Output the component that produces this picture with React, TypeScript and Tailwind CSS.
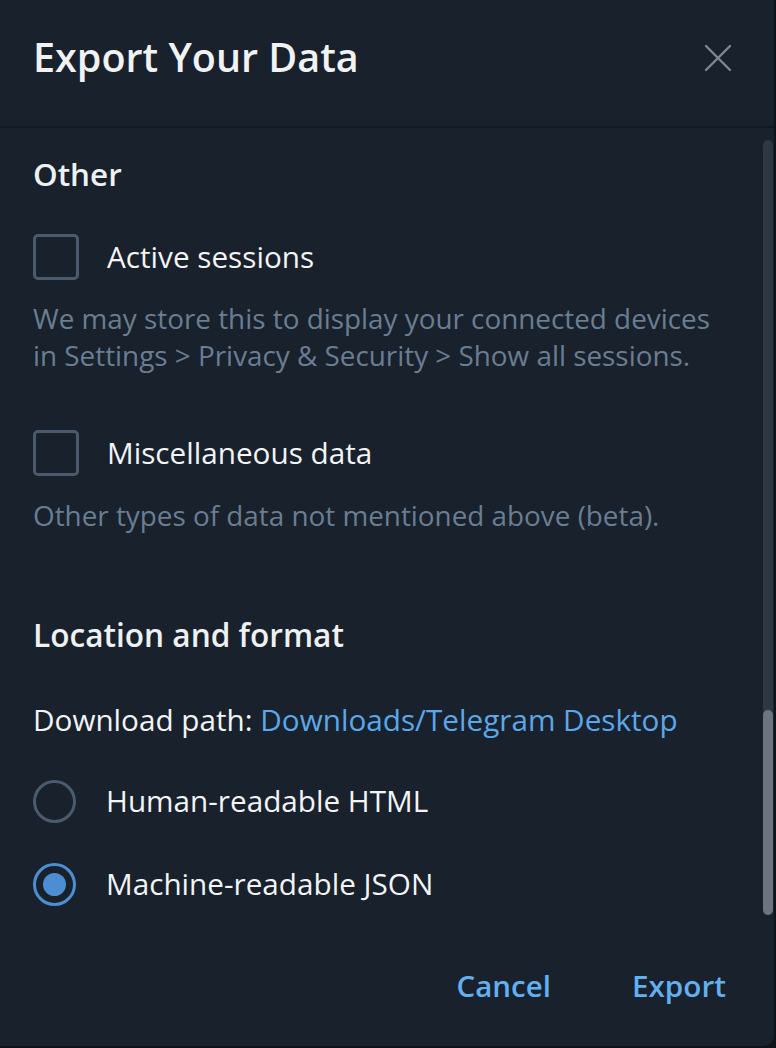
function CheckRow({ label, hint, gap }: { label: string; hint: string; gap: string }) {
  return (
    <div className="flex flex-col">
      <div className="flex items-center h-[46px]">
        <div className="w-[46px] h-[46px] rounded-[5px] border-[3px] border-[#4b5b6d]" />
        <span className="ml-[28px] text-[29.7px] leading-[40px] text-[#f2f4f6]">{label}</span>
      </div>
      <p className={`${gap} text-[27.85px] leading-[37px] text-[#6a7d92]`}>{hint}</p>
    </div>
  )
}

function RadioRow({ label, checked }: { label: string; checked?: boolean }) {
  return (
    <div className="flex items-center h-[44px]">
      <div
        className={`w-[43px] h-[43px] rounded-full border-[3px] flex items-center justify-center ${checked ? 'border-[#4d8ed3]' : 'border-[#4b5b6d]'}`}
      >
        {checked && <div className="w-[23px] h-[23px] rounded-full bg-[#4d8ed3]" />}
      </div>
      <span className="ml-[30px] text-[29.7px] leading-[40px] text-[#f2f4f6]">{label}</span>
    </div>
  )
}

export default function App() {
  return (
    <div
      className="w-[776px] h-[1048px] bg-[#0f141a] overflow-hidden"
      style={{ fontFamily: '"Open Sans", sans-serif' }}
    >
      <div className="w-[774px] h-[1046px] bg-[#18212c] rounded-br-[10px] flex flex-col">
        {/* header */}
        <div className="h-[128px] shrink-0 flex items-start justify-between pl-[33px] pr-[42px] pt-[33px] border-b-[2px] border-[#121920]">
          <h1 className="text-[39.5px] font-semibold text-[#f0f2f4] leading-[48px]">Export Your Data</h1>
          <svg className="mt-[11px]" width="28" height="28" viewBox="0 0 28 28" fill="none" stroke="#7e8892" strokeWidth="2.4" strokeLinecap="round">
            <path d="M2 2 L26 26 M26 2 L2 26" />
          </svg>
        </div>

        <div className="flex flex-1 min-h-0">
          <div className="flex-1 pl-[33px] pr-[36px] pt-[26px]">
            <h2 className="text-[31.4px] font-semibold text-[#eef1f3] leading-[40px]">Other</h2>

            <div className="mt-[40px]">
              <CheckRow
                gap="mt-[20px]"
                label="Active sessions"
                hint="We may store this to display your connected devices in Settings > Privacy & Security > Show all sessions."
              />
            </div>
            <div className="mt-[56px]">
              <CheckRow
                gap="mt-[21px]"
                label="Miscellaneous data"
                hint="Other types of data not mentioned above (beta)."
              />
            </div>

            <h2 className="mt-[81px] text-[31.6px] font-semibold text-[#eef1f3] leading-[40px]">Location and format</h2>

            <p className="mt-[45px] text-[29.7px] text-[#f2f4f6] leading-[40px] whitespace-nowrap">
              Download path: <span className="text-[#5aa8ea]">Downloads/Telegram Desktop</span>
            </p>

            <div className="mt-[39px] flex flex-col gap-[39px]">
              <RadioRow label="Human-readable HTML" />
              <RadioRow label="Machine-readable JSON" checked />
            </div>
          </div>

          {/* scrollbar */}
          <div className="w-[10px] mr-[1px] mt-[12px] h-[775px] rounded-full bg-[#2e3844] flex flex-col justify-end">
            <div className="h-[205px] rounded-full bg-[#6d747d]" />
          </div>
        </div>

        {/* footer */}
        <div className="h-[118px] shrink-0 flex items-center justify-end gap-[81px] pr-[48px] pb-[2px]">
          <button className="text-[29.5px] font-semibold text-[#62b0ef]">Cancel</button>
          <button className="text-[29.7px] font-semibold text-[#62b0ef]">Export</button>
        </div>
      </div>
    </div>
  )
}
